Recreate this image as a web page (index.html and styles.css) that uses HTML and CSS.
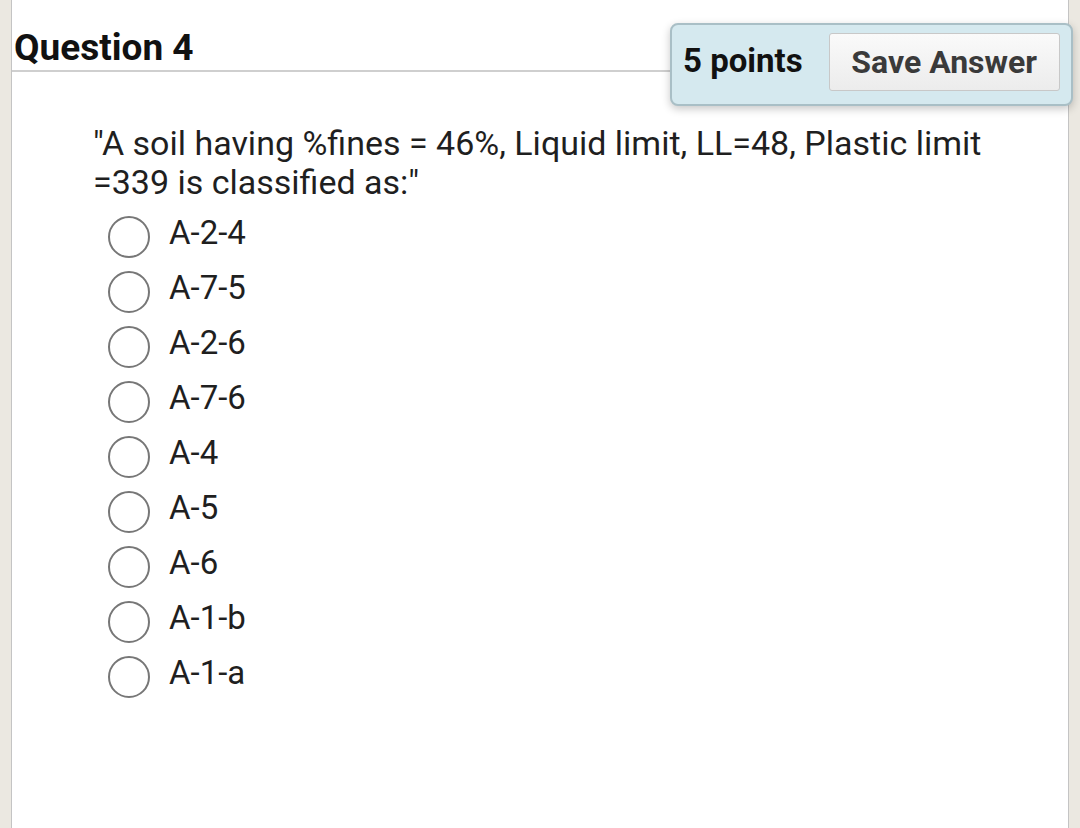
FILE: index.html
```html
<!DOCTYPE html>
<html>
<head>
<meta charset="utf-8">
<link rel="stylesheet" href="styles.css">
</head>
<body>
<div class="page">
  <div class="header">
    <h2 class="title">Question 4</h2>
    <div class="points-box">
      <span class="points">5 points</span>
      <button class="save">Save Answer</button>
    </div>
  </div>
  <div class="question">
    <p class="prompt">"A soil having %fines = 46%, Liquid limit, LL=48, Plastic limit =339 is classified as:"</p>
    <ul class="options">
      <li class="option"><span class="radio"></span><span class="label">A-2-4</span></li>
      <li class="option"><span class="radio"></span><span class="label">A-7-5</span></li>
      <li class="option"><span class="radio"></span><span class="label">A-2-6</span></li>
      <li class="option"><span class="radio"></span><span class="label">A-7-6</span></li>
      <li class="option"><span class="radio"></span><span class="label">A-4</span></li>
      <li class="option"><span class="radio"></span><span class="label">A-5</span></li>
      <li class="option"><span class="radio"></span><span class="label">A-6</span></li>
      <li class="option"><span class="radio"></span><span class="label">A-1-b</span></li>
      <li class="option"><span class="radio"></span><span class="label">A-1-a</span></li>
    </ul>
  </div>
</div>
</body>
</html>
```
FILE: styles.css
```css
html, body {
  margin: 0;
  padding: 0;
}
body {
  background: #ebe8e1;
  font-family: Roboto, "Liberation Sans", sans-serif;
  color: #1c1c1c;
  height: 828px;
  overflow: hidden;
}
.page {
  position: relative;
  margin-left: 11px;
  width: 1056px;
  height: 828px;
  background: #ffffff;
  border-left: 1px solid #c4c4c4;
  border-right: 1px solid #c4c4c4;
}
.header {
  height: 72px;
  border-bottom: 2px solid #cfcfcf;
  box-sizing: border-box;
  display: flex;
  align-items: flex-end;
}
.title {
  margin: 0 0 0 2px;
  font-size: 37px;
  font-weight: 700;
  line-height: 44px;
  color: #111;
}
.points-box {
  position: absolute;
  left: 658px;
  top: 23px;
  width: 403px;
  height: 83px;
  box-sizing: border-box;
  background: #d5e9ef;
  border: 2px solid #a9bfc6;
  border-radius: 8px;
  box-shadow: 0 3px 8px rgba(0,0,0,0.22);
  display: flex;
  align-items: center;
  padding-left: 11px;
}
.points {
  font-size: 33px;
  font-weight: 700;
  color: #111;
  margin-top: -8px;
}
.save {
  margin-left: 26px;
  width: 231px;
  height: 58px;
  margin-top: -5px;
  box-sizing: border-box;
  border: 1px solid #c8c8c8;
  border-radius: 3px;
  background: linear-gradient(#fafafa, #ececec);
  font-family: Roboto, "Liberation Sans", sans-serif;
  font-size: 32px;
  font-weight: 700;
  color: #3a3a3a;
  padding: 0;
}
.question {
  padding-left: 81px;
  padding-top: 52px;
}
.prompt {
  margin: 0;
  font-size: 34px;
  line-height: 39px;
  width: 910px;
  color: #1f1f1f;
}
.options {
  list-style: none;
  margin: 7px 0 0 15px;
  padding: 0;
}
.option {
  display: flex;
  align-items: center;
  height: 55px;
}
.radio {
  width: 42px;
  height: 42px;
  box-sizing: border-box;
  border: 2.5px solid #777;
  border-radius: 50%;
  flex: none;
}
.label {
  margin-left: 19px;
  font-size: 33px;
  color: #1f1f1f;
  margin-top: -8px;
}
```
